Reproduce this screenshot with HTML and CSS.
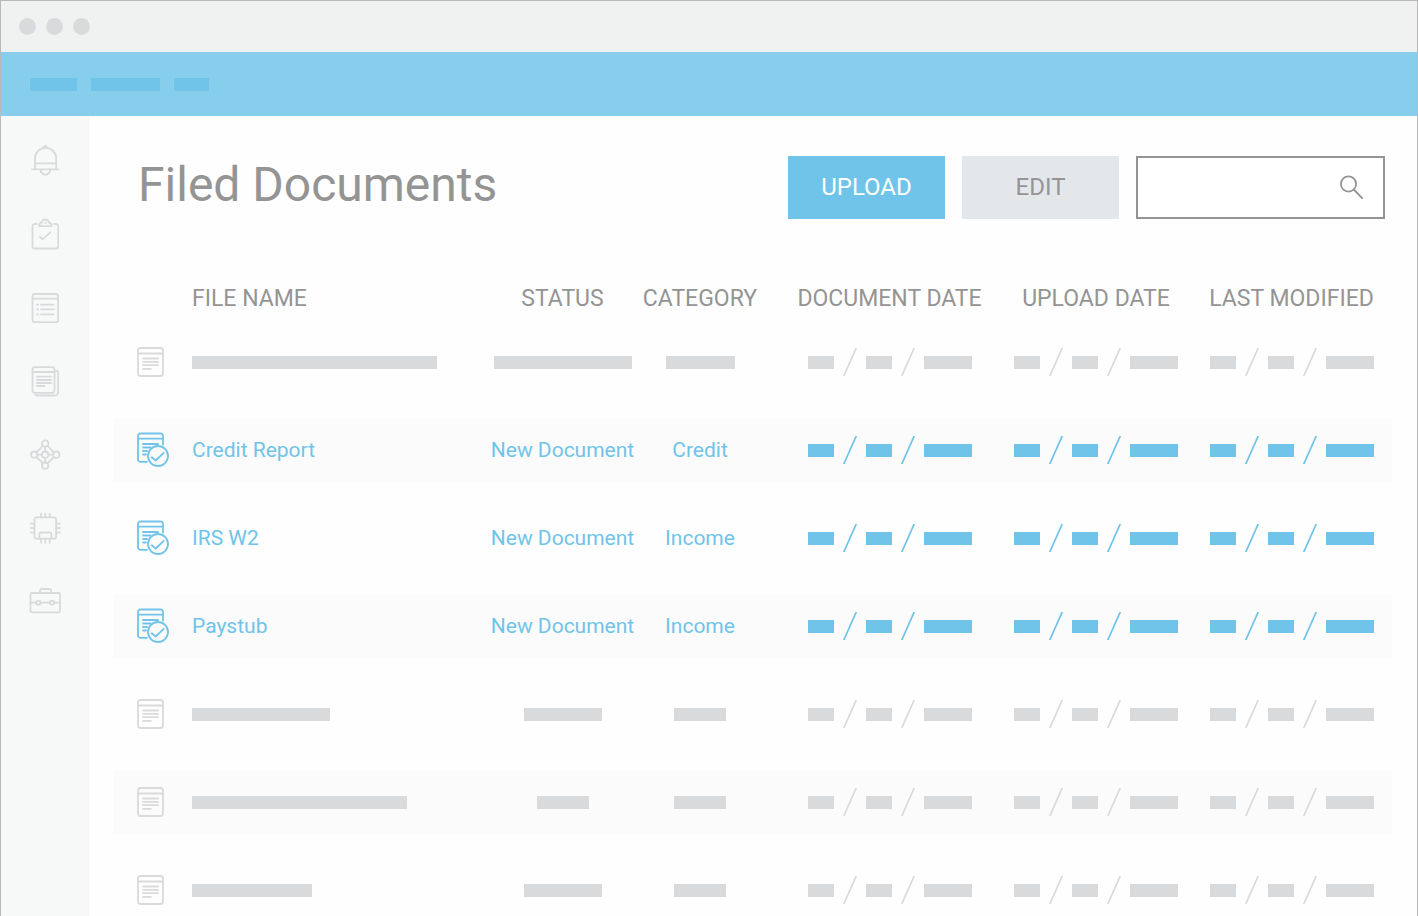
FILE: index.html
```html
<!DOCTYPE html>
<html lang="en">
<head>
<meta charset="utf-8">
<meta name="viewport" content="width=device-width, initial-scale=1">
<title>Filed Documents</title>
<link rel="stylesheet" href="styles.css">
</head>
<body>
<svg class="defs" aria-hidden="true">
  <symbol id="doc" viewBox="0 0 28 30">
    <rect x="1" y="1" width="25" height="28" rx="2.5"/>
    <path d="M1 6.5h25M6 11.5h15M6 14.8h15M6 18.2h15M6 21.8h8"/>
  </symbol>
  <symbol id="doc-check" viewBox="0 0 34 36">
    <path d="M26 12.5V4a2.5 2.5 0 0 0-2.5-2.5h-20A2.5 2.5 0 0 0 1 4v23.3a2.5 2.5 0 0 0 2.5 2.5H10M1 6.7h25M6 12h15M6 15.5h7.5M6 19h4M6 22.5h3"/>
    <circle cx="21" cy="24" r="10"/>
    <path d="M14.7 25.2l4 3.3 8-7.7"/>
  </symbol>
  <symbol id="slash" viewBox="0 0 14 28">
    <path d="M1 27.5L13 .5"/>
  </symbol>
</svg>
<div class="window">
  <header class="titlebar"><i class="dot"></i><i class="dot"></i><i class="dot"></i></header>
  <div class="topnav"><i class="crumb crumb-m"></i><i class="crumb crumb-l"></i><i class="crumb crumb-s"></i></div>
  <div class="body">
    <nav class="sidebar" aria-label="Main">
      <svg class="nav-icon" viewBox="0 0 32 32"><path d="M6 23.3V12.5a10.6 10.6 0 0 1 21.200 0v10.800M6 17.300h21.200M3 23.300h26.600M14 1.600l2.300-1.800 2.300 1.800M11.500 23.300a4.900 5.400 0 0 0 9.800 0"/></svg>
      <svg class="nav-icon" viewBox="0 0 32 32"><path d="M7.500 5H5.500a2 2 0 0 0-2 2v20.500a2 2 0 0 0 2 2h21.700a2 2 0 0 0 2-2V7a2 2 0 0 0-2-2h-2M10 7.200c0-2.400 1-3.400 2.700-3.700C13.300 1.300 14.500.3 16.300.3s3 1 3.600 3.200c1.700.3 2.700 1.300 2.700 3.700zM11 17.700l2.500 2.600 7.800-7"/><circle cx="16.300" cy="3.700" r=".3"/></svg>
      <svg class="nav-icon" viewBox="0 0 32 32"><rect x="3.500" y="2" width="25.600" height="28.200" rx="2.500"/><path d="M3.500 6.700h25.600M8 12.700h1.200M12 12.700h12.700M8 17.300h1.200M12 17.300h12.700M8 22.300h1.200M12 22.300h12.700"/></svg>
      <svg class="nav-icon" viewBox="0 0 32 32"><rect x="3.500" y="2.200" width="22" height="25.600" rx="2.500"/><path d="M3.500 7h22M8 11.700h14M8 15h14M8 18h14M8 21h7.500M27.200 5.600q1.900.3 1.900 2.400v19.500a3 3 0 0 1-3 3H8.500q-1.500 0-2-.8"/></svg>
      <svg class="nav-icon" viewBox="0 0 32 32"><circle cx="16.200" cy="5.600" r="3.200"/><circle cx="16.200" cy="27.700" r="3.200"/><circle cx="5.200" cy="16.700" r="3.200"/><circle cx="27.200" cy="16.700" r="3.200"/><circle cx="16.200" cy="16.700" r="3.200"/><path d="M13.900 7.900l-6.400 6.500M18.500 7.900l6.400 6.500M7.500 19l6.400 6.400M24.900 19l-6.400 6.400M16.200 8.800v4.700M16.200 19.900v4.600M8.400 16.700H13M19.400 16.700H24"/></svg>
      <svg class="nav-icon" viewBox="0 0 32 32"><rect x="5.500" y="6.300" width="21.600" height="21.400" rx="2"/><path d="M12 2.700v3.600M16.200 2.700v3.600M20.700 2.700v3.600M12 27.700v4M16.200 27.700v4M20.700 27.700v4M1.700 12.700h3.800M1.700 17h3.800M1.700 21.700h3.800M27.100 12.700H31M27.100 17H31M27.100 21.700H31M10.300 27.700v-4.200a2 2 0 0 1 2-2h8a2 2 0 0 1 2 2v4.200"/></svg>
      <svg class="nav-icon" viewBox="0 0 32 32"><rect x="1.500" y="9" width="29.600" height="19.300" rx="1.500"/><path d="M10.900 9V7a2 2 0 0 1 2-2h7.200a2 2 0 0 1 2 2v2M1.500 18.700h5.800M11.400 18.700H21M25 18.700h6.100"/><rect x="7.300" y="16.900" width="4.100" height="3.600" rx="1"/><rect x="21" y="16.900" width="4.100" height="3.600" rx="1"/></svg>
    </nav>
    <main class="main">
      <div class="toolbar">
        <h1 class="title">Filed Documents</h1>
        <button class="btn btn-primary" type="button">UPLOAD</button>
        <button class="btn" type="button">EDIT</button>
        <label class="search">
          <input class="search-input" type="search" aria-label="Search documents">
          <svg class="search-icon" viewBox="0 0 24 24" aria-hidden="true"><circle cx="9.500" cy="9" r="7.600"/><path d="M14.800 14.500l8.700 9"/></svg>
        </label>
      </div>
      <table class="files">
        <colgroup>
          <col class="col-icon"><col><col class="col-status"><col class="col-category"><col class="col-document"><col class="col-upload"><col class="col-modified">
        </colgroup>
        <thead>
          <tr><td></td><th class="name" scope="col">FILE NAME</th><th scope="col">STATUS</th><th scope="col">CATEGORY</th><th class="document" scope="col">DOCUMENT DATE</th><th scope="col">UPLOAD DATE</th><th class="modified" scope="col">LAST MODIFIED</th></tr>
        </thead>
        <tbody id="rows"></tbody>
      </table>
    </main>
  </div>
</div>
<script src="app.js"></script>
</body>
</html>
```

FILE: styles.css
```css
* { box-sizing: border-box; }

body {
  margin: 0;
  font-family: Roboto, "Liberation Sans", sans-serif;
  color: #949494;
  background: #fefefe;
}

.defs { display: none; }

svg {
  fill: none;
  stroke: currentColor;
  stroke-linecap: round;
  stroke-linejoin: round;
}

.window {
  display: flex;
  flex-direction: column;
  height: 100vh;
  overflow: hidden;
  border: 1px solid #b9b9b9;
  border-bottom: 0;
}

.titlebar {
  display: flex;
  flex: none;
  align-items: center;
  gap: 10px;
  height: 51px;
  padding: 0 18px;
  background: #f0f2f2;
}

.dot {
  width: 17px;
  height: 17px;
  border-radius: 50%;
  background: #d9dadc;
}

.topnav {
  display: flex;
  flex: none;
  align-items: center;
  gap: 14px;
  height: 64px;
  padding: 0 29px;
  background: #87ceec;
}

.crumb {
  height: 13px;
  background: #70c4e9;
}

.crumb-s { width: 35px; }
.crumb-m { width: 47px; }
.crumb-l { width: 69px; }

.body {
  display: flex;
  flex: 1;
  min-height: 0;
}

.sidebar {
  display: flex;
  flex: none;
  flex-direction: column;
  align-items: center;
  gap: 41px;
  width: 88px;
  padding-top: 30px;
  color: #d9dadc;
  background: #f7f9f9;
}

.nav-icon {
  flex: none;
  width: 32px;
  height: 32px;
  overflow: visible;
  stroke-width: 1.8;
}

.main {
  flex: 1;
  min-width: 0;
  padding: 40px 25px 0 24px;
}

.toolbar {
  display: flex;
  align-items: center;
  gap: 17px;
  padding: 0 7px 0 25px;
}

.title {
  flex: 1;
  margin: 0;
  padding-bottom: 6px;
  font-size: 48px;
  font-weight: 400;
  line-height: 56px;
  white-space: nowrap;
}

.btn {
  width: 157px;
  height: 63px;
  border: 0;
  padding: 0 0 2px;
  font: 400 24px/28px Roboto, "Liberation Sans", sans-serif;
  color: #949494;
  background: #e4e7ea;
}

.btn-primary {
  color: #fff;
  background: #70c4e9;
}

.search {
  display: flex;
  align-items: center;
  width: 249px;
  height: 63px;
  padding: 0 20px 2px;
  border: 2px solid #949494;
  background: #fff;
}

.search-input {
  flex: 1;
  min-width: 0;
  border: 0;
  padding: 0;
  outline: 0;
  font: inherit;
  color: inherit;
  background: transparent;
}

.search-icon {
  width: 24px;
  height: 24px;
  stroke-width: 1.8;
}

.files {
  width: 100%;
  margin-top: 46px;
  table-layout: fixed;
  border-spacing: 0 25px;
}

.col-icon { width: 79px; }
.col-status { width: 151px; }
.col-category { width: 124px; }
.col-document { width: 242px; }
.col-upload { width: 184px; }
.col-modified { width: 204px; }

.files th,
.files td {
  padding: 0;
  text-align: center;
  vertical-align: middle;
  white-space: nowrap;
}

.files th {
  height: 16px;
  padding-top: 2px;
  font-size: 23px;
  font-weight: 400;
  line-height: 14px;
}

.files td {
  font-size: 21px;
  line-height: 24px;
}

.files tbody td { padding-bottom: 1px; }

.files .icon {
  height: 63px;
  padding-left: 24px;
  text-align: left;
}

.files .name { text-align: left; }
.files .document { padding-left: 13px; }
.files .modified { padding-left: 3px; }

.files tbody tr { color: #d9dadc; }
.files tbody tr:nth-child(even) { background: #fbfbfb; }
.files tbody .new { color: #70c4e9; }

.doc {
  display: block;
  width: 28px;
  height: 30px;
  stroke-width: 1.8;
}

.doc-check {
  display: block;
  width: 34px;
  height: 36px;
  stroke-width: 1.8;
}

.bar {
  display: block;
  height: 13px;
  margin: 0 auto;
  background: currentColor;
}

.name .bar { margin: 0; }

.date {
  display: flex;
  align-items: center;
  justify-content: center;
  gap: 9px;
}

.date .bar { margin: 0; }

.slash {
  width: 14px;
  height: 28px;
  stroke-width: 1.8;
}

.bar-short { width: 26px; }
.bar-year { width: 48px; }
```

FILE: app.js
```js
// A number is the width of a placeholder bar; a string is real text.
const files = [
  [245, 138, 69],
  ['Credit Report', 'New Document', 'Credit'],
  ['IRS W2', 'New Document', 'Income'],
  ['Paystub', 'New Document', 'Income'],
  [138, 78, 52],
  [215, 52, 52],
  [120, 78, 52]
];

const content = v => typeof v === 'number' ? `<i class="bar" style="width:${v}px"></i>` : v;
const slash = '<svg class="slash"><use href="#slash"/></svg>';
const short = '<i class="bar bar-short"></i>';
const date = `<div class="date">${short}${slash}${short}${slash}<i class="bar bar-year"></i></div>`;

document.getElementById('rows').innerHTML = files.map(([name, status, category]) => {
  const isNew = typeof name === 'string';
  const icon = isNew ? 'doc-check' : 'doc';
  return `<tr class="${isNew ? 'new' : 'pending'}">
    <td class="icon"><svg class="${icon}"><use href="#${icon}"/></svg></td>
    <td class="name">${content(name)}</td>
    <td>${content(status)}</td>
    <td>${content(category)}</td>
    <td class="document">${date}</td>
    <td>${date}</td>
    <td class="modified">${date}</td>
  </tr>`;
}).join('');
```
